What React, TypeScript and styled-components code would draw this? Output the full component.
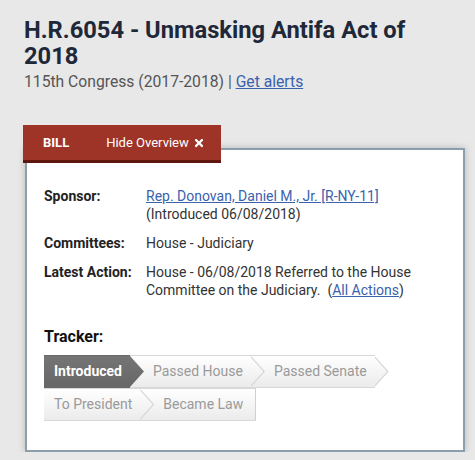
import React from "react";
import styled, { createGlobalStyle } from "styled-components";
import { FaTimes } from "react-icons/fa";

const Global = createGlobalStyle`
  html, body { margin: 0; padding: 0; background: #e8e8e8; overflow: hidden; }
  body { font-family: Roboto, "Liberation Sans", Arial, sans-serif; }
`;

const Page = styled.div`
  padding: 17px 10px 0 23px;
`;

const Title = styled.h1`
  margin: 0 0 0 1px;
  font-size: 23.7px;
  line-height: 26px;
  font-weight: 700;
  color: #1f2839;
`;

const Subtitle = styled.div`
  margin: 2px 0 0 1px;
  font-size: 15.7px;
  line-height: 22px;
  color: #555;
`;

const Link = styled.a`
  color: #3a62ad;
  text-decoration: underline;
`;

const Tab = styled.div`
  position: relative;
  z-index: 2;
  display: flex;
  align-items: center;
  width: 198px;
  height: 35px;
  box-sizing: content-box;
  margin-top: 32px;
  margin-bottom: -15px;
  background: #9d3427;
  border-bottom: 3px solid #5f160f;
  color: #fff;
  font-size: 13px;
`;

const TabLabel = styled.span`
  font-weight: 700;
  margin-left: 20px;
`;

const TabAction = styled.span`
  display: flex;
  align-items: center;
  gap: 4px;
  margin-left: 37px;
`;

const Card = styled.div`
  margin-left: 2px;
  background: #fff;
  border: 2px solid #8c9ea9;
  box-shadow: 0 0 7px rgba(0, 0, 0, 0.22);
  padding: 37px 17px 29px 17px;
  height: 304px;
  box-sizing: border-box;
`;

const Details = styled.dl`
  display: grid;
  grid-template-columns: 102px 1fr;
  row-gap: 11px;
  margin: 0;
  font-size: 14px;
  line-height: 18px;
`;

const Term = styled.dt`
  font-weight: 700;
  color: #222;
`;

const Value = styled.dd`
  margin: 0;
  color: #333;
`;

const Aside = styled.span`
  white-space: nowrap;
`;

const TrackerLabel = styled.div`
  margin-top: 28px;
  font-size: 16px;
  line-height: 20px;
  font-weight: 700;
  color: #111;
`;

const Steps = styled.ol`
  list-style: none;
  margin: 8px 0 0;
  padding: 0;
  display: flex;
  flex-wrap: wrap;
  width: 400px;
`;

const Step = styled.li<{ $active?: boolean; $first?: boolean; $last?: boolean }>`
  position: relative;
  height: 31px;
  line-height: 31px;
  font-size: 14px;
  padding: 0 ${(p) => (p.$last ? 12 : 8)}px 0 ${(p) => (p.$first ? 10 : 23)}px;
  border-top: 1px solid ${(p) => (p.$active ? "#6a6a6a" : "#d8d8d8")};
  border-bottom: 1px solid ${(p) => (p.$active ? "#6a6a6a" : "#d8d8d8")};
  border-right: ${(p) => (p.$last ? "1px solid #d0d0d0" : "none")};
  background: ${(p) =>
    p.$active ? "linear-gradient(#757575, #676767)" : "linear-gradient(#ffffff, #ebebeb)"};
  color: ${(p) => (p.$active ? "#fff" : "#9a9a9a")};
  font-weight: ${(p) => (p.$active ? 700 : 400)};
  white-space: nowrap;

  &::before,
  &::after {
    content: ${(p) => (p.$last ? "none" : '""')};
    position: absolute;
    top: 0;
    height: 100%;
    width: 14px;
    z-index: 1;
    clip-path: polygon(0 0, 100% 50%, 0 100%);
  }
  &::before {
    left: 100%;
    background: ${(p) => (p.$active ? "linear-gradient(#757575, #676767)" : "#d4d4d4")};
  }
  &::after {
    left: calc(100% - 1.5px);
    background: ${(p) =>
      p.$active ? "linear-gradient(#757575, #676767)" : "linear-gradient(#ffffff, #ebebeb)"};
  }
`;

export default function App() {
  return (
    <>
      <Global />
      <Page>
        <Title>H.R.6054 - Unmasking Antifa Act of 2018</Title>
        <Subtitle>
          115th Congress (2017-2018) | <Link href="#">Get alerts</Link>
        </Subtitle>
        <Tab>
          <TabLabel>BILL</TabLabel>
          <TabAction>
            Hide Overview <FaTimes size={12} />
          </TabAction>
        </Tab>
        <Card>
          <Details>
            <Term>Sponsor:</Term>
            <Value>
              <Link href="#">Rep. Donovan, Daniel M., Jr. [R-NY-11]</Link>
              <br />
              (Introduced 06/08/2018)
            </Value>
            <Term>Committees:</Term>
            <Value>House - Judiciary</Value>
            <Term>Latest Action:</Term>
            <Value>
              House - 06/08/2018 Referred to the House Committee on the Judiciary.{"\u00a0\u00a0"}
              <Aside>
                (<Link href="#">All Actions</Link>)
              </Aside>
            </Value>
          </Details>
          <TrackerLabel>Tracker:</TrackerLabel>
          <Steps>
            <Step $active $first>Introduced</Step>
            <Step>Passed House</Step>
            <Step>Passed Senate</Step>
            <Step $first>To President</Step>
            <Step $last>Became Law</Step>
          </Steps>
        </Card>
      </Page>
    </>
  );
}
